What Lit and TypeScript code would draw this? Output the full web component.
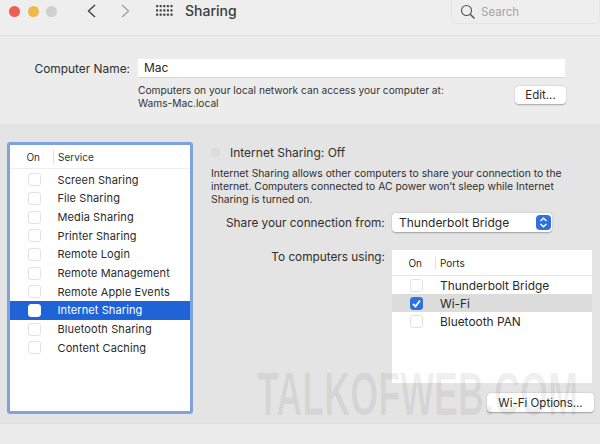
import { LitElement, html, css, svg } from "lit";
import { customElement } from "lit/decorators.js";

const SERVICES = ["Screen Sharing","File Sharing","Media Sharing","Printer Sharing","Remote Login","Remote Management","Remote Apple Events","Internet Sharing","Bluetooth Sharing","Content Caching"];
const PORTS = ["Thunderbolt Bridge","Wi-Fi","Bluetooth PAN"];

@customElement("app-root")
export class AppRoot extends LitElement {
  static styles = css`
    :host { display:block; position:relative; width:600px; height:444px; overflow:hidden; background:#ececed; font-family:Inter,"Noto Sans",sans-serif; color:#2a2a2a; font-size:12px; }
    .titlebar { height:35px; box-sizing:content-box; display:flex; align-items:flex-start; border-bottom:1px solid #dcdcdc; background:#eeeeee; }
    .titlebar > * { margin-top:4px; }
    .dot { width:11px; height:11px; border-radius:50%; margin-right:7.5px; flex:none; }
    .dots { display:flex; margin-left:9px; margin-top:6px !important; }
    .r { background:#ec5f59; } .y { background:#efb945; } .g { background:#cfcfcf; }
    .nav { display:block; flex:none; }
    .back { margin-left:22.5px; } .fwd { margin-left:25px; } .grid-ic { margin-left:26px; margin-top:5px !important; }
    .title { margin-left:12px; font-size:14px; line-height:14px; font-weight:500; color:#3c3c3c; }
    .search { margin-left:auto; margin-right:0; margin-top:0 !important; width:149px; height:24px; border:1px solid #e5e5e5; border-top:none; border-radius:0 0 5px 5px; display:flex; align-items:center; box-sizing:border-box; }
    .search svg { margin-left:8px; }
    .search span { margin-left:5px; color:#a4a4a6; font-size:11.5px; }
    .top { height:89px; box-sizing:border-box; padding-top:23px; position:relative; border-bottom:1px solid #e2e2e2; }
    .namerow { display:flex; align-items:center; height:18px; }
    .namelabel { width:130px; text-align:right; font-size:11.9px; color:#2f2f2f; }
    .nameinput { margin-left:8px; width:427px; height:18px; background:#fff; box-sizing:border-box; padding-left:6px; line-height:18px; font-size:12px; box-shadow:0 1px 0 #d8d8d8; }
    .helprow { display:flex; margin-left:138px; margin-top:7px; width:428px; justify-content:space-between; }
    .help { font-size:10.2px; line-height:13px; color:#333; }
    .btn { background:#fff; border-radius:4px; box-shadow:0 0.5px 1.5px rgba(0,0,0,.3); font-size:11.5px; display:flex; align-items:center; justify-content:center; color:#2c2c2c; box-sizing:border-box; }
    .edit { width:51px; height:18px; margin-top:2px; }
    .middle { height:299px; background:#e4e4e5; box-sizing:border-box; padding:17px 6px 0 7px; display:flex; border-bottom:1px solid #e0e0e0; }
    .list { width:186px; height:272px; flex:none; box-sizing:border-box; background:#fff; border:3px solid #7fa3df; border-radius:3px; }
    .lhead { display:flex; height:23px; align-items:center; border-bottom:1px solid #eeeeee; margin-bottom:1.5px; font-size:10px; color:#333; }
    .on { width:44px; text-align:right; padding-right:13px; box-sizing:border-box; border-right:1px solid #e2e2e2; height:14px; line-height:14px; flex:none; margin-right:4px; }
    .row { height:18.67px; display:flex; align-items:center; font-size:11px; letter-spacing:.1px; color:#2a2a2a; }
    .row.sel { background:#2063d6; color:#fff; }
    .cb { width:13px; height:13px; border-radius:3px; background:#fff; border:1px solid #e2e2e2; box-sizing:border-box; margin-left:18px; margin-right:16.5px; flex:none; display:flex; align-items:center; justify-content:center; }
    .sel .cb { border-color:#fff; }
    .right { margin-left:18px; flex:1; min-width:0; position:relative; }
    .status { display:flex; align-items:center; height:20px; font-size:12px; color:#303030; }
    .led { width:9px; height:9px; border-radius:50%; background:#dedede; border:1px solid #dadada; margin-right:10px; box-sizing:border-box; flex:none; }
    .desc { width:372px; margin:5px 0 0 0; font-size:10.33px; line-height:13px; color:#2f2f2f; }
    .share { display:flex; align-items:center; margin:7px 0 0 15px; height:19px; }
    .share label { width:166px; flex:none; }
    .share label, .tolabel { font-size:11.8px; color:#2f2f2f; white-space:nowrap; }
    .select { width:160px; height:19px; background:#fff; border-radius:4px; box-shadow:0 0.5px 1.5px rgba(0,0,0,.3); display:flex; align-items:center; box-sizing:border-box; padding:0 1px 0 7px; font-size:12px; justify-content:space-between; flex:none; }
    .stepper { width:15px; height:15px; border-radius:4px; background:#2e72e0; display:block; }
    .tostack { display:flex; margin-top:18px; }
    .tolabel { width:174px; text-align:right; line-height:14px; }
    .table { margin-left:7px; width:200px; height:133px; background:#fff; flex:none; }
    .thead { height:25px; display:flex; align-items:center; border-bottom:1px solid #e6e6e6; font-size:10px; background:#fff; }
    .thead .on { width:44px; margin-right:4px; }
    .prow { height:18px; display:flex; align-items:center; font-size:11.9px; color:#2a2a2a; }
    .prow.hl { background:#dcdcdc; }
    .prow .cb { margin-right:17px; }
    .cb.checked { background:#2e72e0; border-color:#2e72e0; }
    .opt { width:107px; height:19px; margin:10px 0 0 276px; }
    .watermark { position:absolute; left:257px; top:364px; font-family:"Liberation Sans",sans-serif; font-weight:700; font-size:62px; line-height:60px; color:rgba(0,0,0,.06); transform-origin:0 0; transform:scaleX(.58); white-space:nowrap; pointer-events:none; }
  `;

  render() {
    const gridDots = [];
    for (let y = 0; y < 3; y++) for (let x = 0; x < 5; x++)
      gridDots.push(svg`<rect x=${x * 3.6} y=${y * 4.3} width="2.2" height="2.2" rx=".6" fill="#444"/>`);
    return html`
      <div class="titlebar">
        <div class="dots"><span class="dot r"></span><span class="dot y"></span><span class="dot g"></span></div>
        <svg class="nav back" width="9" height="14" viewBox="0 0 9 14"><path d="M8 1L1.5 7L8 13" fill="none" stroke="#3f3f3f" stroke-width="1.4"/></svg>
        <svg class="nav fwd" width="9" height="14" viewBox="0 0 9 14"><path d="M1 1L7.5 7L1 13" fill="none" stroke="#a3a3a3" stroke-width="1.4"/></svg>
        <svg class="nav grid-ic" width="17" height="11" viewBox="0 0 17 11">${gridDots}</svg>
        <span class="title">Sharing</span>
        <div class="search">
          <svg width="16" height="16" viewBox="0 0 16 16"><circle cx="6.5" cy="6.5" r="5" fill="none" stroke="#555" stroke-width="1.1"/><path d="M10.2 10.2L14.5 14.5" stroke="#555" stroke-width="1.5"/></svg>
          <span>Search</span>
        </div>
      </div>
      <div class="top">
        <div class="namerow"><div class="namelabel">Computer Name:</div><div class="nameinput">Mac</div></div>
        <div class="helprow">
          <div class="help">Computers on your local network can access your computer at:<br>Wams-Mac.local</div>
          <div class="btn edit">Edit...</div>
        </div>
      </div>
      <div class="middle">
        <div class="list">
          <div class="lhead"><div class="on">On</div><div>Service</div></div>
          ${SERVICES.map((s) => html`<div class="row ${s === "Internet Sharing" ? "sel" : ""}"><span class="cb"></span>${s}</div>`)}
        </div>
        <div class="right">
          <div class="status"><span class="led"></span>Internet Sharing: Off</div>
          <div class="desc">Internet Sharing allows other computers to share your connection to the internet. Computers connected to AC power won’t sleep while Internet Sharing is turned on.</div>
          <div class="share"><label>Share your connection from:</label>
            <div class="select">Thunderbolt Bridge
              <svg class="stepper" viewBox="0 0 15 15"><path d="M4.5 6L7.5 3.2L10.5 6M4.5 9L7.5 11.8L10.5 9" fill="none" stroke="#fff" stroke-width="1.4"/></svg>
            </div>
          </div>
          <div class="tostack">
            <div class="tolabel">To computers using:</div>
            <div class="table">
              <div class="thead"><div class="on">On</div><div>Ports</div></div>
              ${PORTS.map((p) => html`<div class="prow ${p === "Wi-Fi" ? "hl" : ""}"><span class="cb ${p === "Wi-Fi" ? "checked" : ""}">${p === "Wi-Fi" ? html`<svg width="11" height="11" viewBox="0 0 11 11"><path d="M2 6L4.5 8.5L9 2.5" fill="none" stroke="#fff" stroke-width="1.8"/></svg>` : ""}</span>${p}</div>`)}
            </div>
          </div>
          <div class="btn opt">Wi-Fi Options...</div>
        </div>
      </div>
      <div class="watermark">TALKOFWEB.COM</div>
    `;
  }
}
